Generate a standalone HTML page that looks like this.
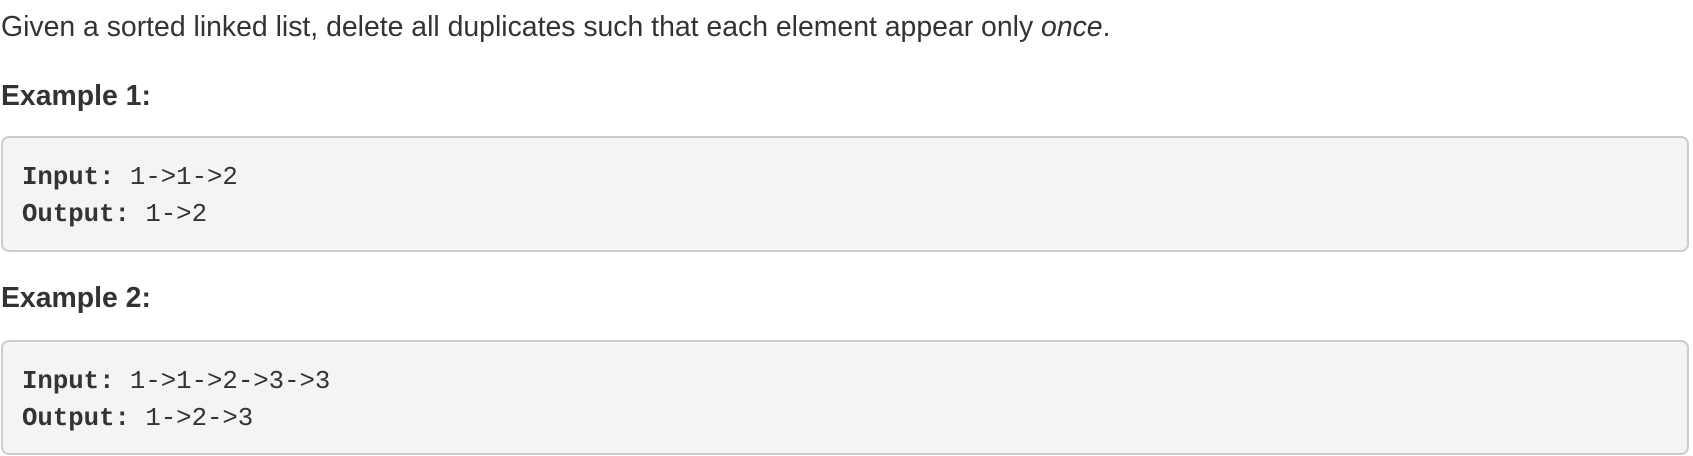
<!DOCTYPE html>
<html><head><style>
body{margin:0;width:1693px;height:456px;background:#fff;color:#333;font-family:"Liberation Sans",Arial,sans-serif;overflow:hidden;position:relative}
.t{position:absolute;left:1px;font-size:28.4px;white-space:nowrap;line-height:1}
.h{font-weight:bold}
.box{position:absolute;left:1px;width:1688px;background:#f4f4f4;border:2px solid #ccc;border-radius:8px;box-sizing:border-box}
.code{position:absolute;left:22px;font-family:"Liberation Mono",monospace;font-size:25.7px;line-height:1;white-space:nowrap;color:#333}
</style></head><body>
<div class="t" style="top:13px">Given a sorted linked list, delete all duplicates such that each element appear only <i>once</i>.</div>
<div class="t h" style="top:82px">Example 1:</div>
<div class="box" style="top:136px;height:116px"></div>
<div class="code" style="top:165px"><b>Input:</b> 1-&gt;1-&gt;2</div>
<div class="code" style="top:202px"><b>Output:</b> 1-&gt;2</div>
<div class="t h" style="top:284px">Example 2:</div>
<div class="box" style="top:340px;height:115px"></div>
<div class="code" style="top:369px"><b>Input:</b> 1-&gt;1-&gt;2-&gt;3-&gt;3</div>
<div class="code" style="top:406px"><b>Output:</b> 1-&gt;2-&gt;3</div>
</body></html>
